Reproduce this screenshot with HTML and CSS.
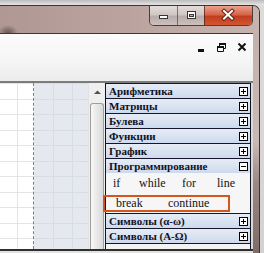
FILE: index.html
```html
<!DOCTYPE html>
<html lang="ru">
<head>
<meta charset="utf-8">
<title>Панель</title>
<link rel="stylesheet" href="styles.css">
</head>
<body>
<div class="screen">
  <div class="desk-top"></div>
  <div class="window">
    <div class="titlebar">
      <div class="caption-buttons">
        <div class="cbtn cbtn-min">
          <svg width="27" height="19" viewBox="0 0 27 19"><rect x="9.5" y="9.5" width="8" height="3" fill="#fff" stroke="#3a3333"/></svg>
        </div>
        <div class="cbtn cbtn-max">
          <svg width="26" height="19" viewBox="0 0 26 19"><rect x="9.5" y="5.5" width="8" height="7" fill="#fff" stroke="#3a3333"/><rect x="11.5" y="8.5" width="4" height="2" fill="#bfb4b2" stroke="#3a3333"/></svg>
        </div>
        <div class="cbtn cbtn-close">
          <svg width="47" height="19" viewBox="0 0 47 19"><path d="M19 5L27 12.5M27 5L19 12.5" stroke="#5a2418" stroke-width="4" stroke-linecap="square"/><path d="M19 5L27 12.5M27 5L19 12.5" stroke="#fff" stroke-width="2" stroke-linecap="square"/></svg>
        </div>
      </div>
    </div>
    <div class="client">
      <div class="mdi-bar">
        <svg class="mdi-controls" width="50" height="10" viewBox="0 0 50 10">
          <rect x="1" y="6" width="6" height="3" fill="#111"/>
          <rect x="22" y="0" width="7" height="2" fill="#111"/>
          <path d="M28.5 2V5.5H26.5M22.5 2V3" fill="none" stroke="#111"/>
          <rect x="20" y="3" width="7" height="2" fill="#111"/>
          <path d="M20.5 5V8.5H26.5V5" fill="none" stroke="#111"/>
          <path d="M41.5 0.5L48.5 7.5M48.5 0.5L41.5 7.5" stroke="#111" stroke-width="2"/>
        </svg>
      </div>
      <div class="workspace">
        <div class="sheet">
          <div class="sheet-white"></div>
          <div class="sheet-blue"></div>
        </div>
        <div class="vscroll">
          <div class="vs-up"><svg width="7" height="4" viewBox="0 0 7 4"><path d="M0 4L3.5 0.5L7 4z" fill="#505050"/></svg></div>
          <div class="vs-thumb"></div>
        </div>
        <div class="panel">
          <div class="hdr"><span>Арифметика</span><svg class="pm" width="9" height="9" viewBox="0 0 9 9"><rect x=".5" y=".5" width="8" height="8" fill="#fff" stroke="#000"/><path d="M2 4.5h5M4.5 2v5" stroke="#000"/></svg></div>
          <div class="hdr"><span>Матрицы</span><svg class="pm" width="9" height="9" viewBox="0 0 9 9"><rect x=".5" y=".5" width="8" height="8" fill="#fff" stroke="#000"/><path d="M2 4.5h5M4.5 2v5" stroke="#000"/></svg></div>
          <div class="hdr"><span>Булева</span><svg class="pm" width="9" height="9" viewBox="0 0 9 9"><rect x=".5" y=".5" width="8" height="8" fill="#fff" stroke="#000"/><path d="M2 4.5h5M4.5 2v5" stroke="#000"/></svg></div>
          <div class="hdr"><span>Функции</span><svg class="pm" width="9" height="9" viewBox="0 0 9 9"><rect x=".5" y=".5" width="8" height="8" fill="#fff" stroke="#000"/><path d="M2 4.5h5M4.5 2v5" stroke="#000"/></svg></div>
          <div class="hdr"><span>График</span><svg class="pm" width="9" height="9" viewBox="0 0 9 9"><rect x=".5" y=".5" width="8" height="8" fill="#fff" stroke="#000"/><path d="M2 4.5h5M4.5 2v5" stroke="#000"/></svg></div>
          <div class="hdr"><span>Программирование</span><svg class="pm" width="9" height="9" viewBox="0 0 9 9"><rect x=".5" y=".5" width="8" height="8" fill="#fff" stroke="#000"/><path d="M2 4.5h5" stroke="#000"/></svg></div>
          <div class="pbody">
            <div class="prow r1"><span>if</span><span>while</span><span>for</span><span>line</span></div>
            <div class="prow r2"><span>break</span><span>continue</span></div>
            <div class="mark"></div>
          </div>
          <div class="hdr"><span>Символы (α-ω)</span><svg class="pm" width="9" height="9" viewBox="0 0 9 9"><rect x=".5" y=".5" width="8" height="8" fill="#fff" stroke="#000"/><path d="M2 4.5h5M4.5 2v5" stroke="#000"/></svg></div>
          <div class="hdr"><span>Символы (Α-Ω)</span><svg class="pm" width="9" height="9" viewBox="0 0 9 9"><rect x=".5" y=".5" width="8" height="8" fill="#fff" stroke="#000"/><path d="M2 4.5h5M4.5 2v5" stroke="#000"/></svg></div>
          <div class="panel-end"></div>
        </div>
        <div class="edge"></div>
      </div>
      <div class="status"></div>
    </div>
  </div>
</div>
</body>
</html>
```

FILE: styles.css
```css
* { box-sizing: border-box; }
html, body { margin: 0; padding: 0; }
body {
  width: 264px;
  height: 253px;
  overflow: hidden;
  background: #d6d6d6;
  font-family: "Liberation Serif", "Times New Roman", serif;
}
.screen {
  width: 264px;
  height: 253px;
  display: flex;
  flex-direction: column;
  background: linear-gradient(to bottom, #dcdcdc, #d2d2d2);
}
.desk-top {
  height: 5px;
  flex: none;
  background: linear-gradient(#bcbcbc, #e4e4e4);
}
.window {
  flex: 1;
  min-height: 0;
  margin-right: 4px;
  border-top: 1px solid #3b3434;
  border-right: 1px solid #3b3434;
  border-top-right-radius: 7px;
  background: linear-gradient(to bottom, #c3afab 0%, #c9b9b5 55%, #9b8783 72%, #7f6b67 100%);
  display: flex;
  flex-direction: column;
}
.titlebar {
  height: 27px;
  flex: none;
  display: flex;
  justify-content: flex-end;
  align-items: flex-start;
  padding-right: 6px;
  border-top-right-radius: 6px;
  background:
    radial-gradient(ellipse 10px 8px at 8px 27px, rgba(70, 55, 55, 0.7), rgba(70, 55, 55, 0)),
    linear-gradient(to right, #b09793 0%, #bba4a0 50%, #c7b4af 100%);
}
.caption-buttons {
  display: flex;
  height: 20px;
  border: 1px solid rgba(45, 35, 35, 0.8);
  border-top: none;
  border-radius: 0 0 5px 5px;
  overflow: hidden;
}
.cbtn { display: flex; }
.cbtn-min {
  width: 27px;
  background: linear-gradient(#e4dcdb, #d0c6c4 45%, #b8acaa 55%, #cbc1bf);
}
.cbtn-max {
  width: 27px;
  border-left: 1px solid rgba(60, 50, 50, 0.6);
  background: linear-gradient(#e4dcdb, #d0c6c4 45%, #b8acaa 55%, #cbc1bf);
}
.cbtn-close {
  width: 48px;
  border-left: 1px solid rgba(60, 30, 30, 0.7);
  background: linear-gradient(#eba08c, #d8654a 45%, #c13d20 55%, #d45630);
}
.client {
  flex: 1;
  min-height: 0;
  margin-right: 6px;
  border-top: 1px solid #3e3535;
  display: flex;
  flex-direction: column;
  background: #fff;
}
.mdi-bar {
  height: 49px;
  flex: none;
  border-bottom: 2px solid #7b7b7b;
  background: linear-gradient(#fbfbfb, #f6f6f6 55%, #ececec);
  display: flex;
  justify-content: flex-end;
  align-items: flex-start;
  padding: 9px 6px 0 0;
}
.workspace {
  flex: 1;
  min-height: 0;
  display: flex;
}
.sheet {
  width: 88px;
  flex: none;
  display: flex;
}
.sheet-white {
  width: 34px;
  border-right: 1px dashed #7d7d7d;
  background-color: #fff;
  background-image:
    linear-gradient(to right, transparent 17px, #e4e4e4 17px, #e4e4e4 18px, transparent 18px),
    linear-gradient(to bottom, #e4e4e4 0, #e4e4e4 1px, transparent 1px, transparent 16px, #e4e4e4 16px, #e4e4e4 17px, transparent 17px);
  background-size: 100% 100%, 100% 31px;
}
.sheet-blue {
  flex: 1;
  background-color: #e5e8ef;
  background-image:
    linear-gradient(to right, transparent 19px, #d8dce4 19px, #d8dce4 20px, transparent 20px, transparent 38px, #d8dce4 38px, #d8dce4 39px, transparent 39px),
    linear-gradient(to bottom, #d8dce4 0, #d8dce4 1px, transparent 1px, transparent 16px, #d8dce4 16px, #d8dce4 17px, transparent 17px);
  background-size: 100% 100%, 100% 31px;
}
.vscroll {
  width: 17px;
  flex: none;
  display: flex;
  flex-direction: column;
  padding: 0 1px;
  background: #efefef;
  border-left: 1px solid #e2e2e2;
}
.vs-up {
  height: 20px;
  flex: none;
  display: flex;
  justify-content: center;
  padding-top: 7px;
}
.vs-thumb {
  flex: 1;
  border: 1px solid #9e9e9e;
  border-bottom: none;
  border-radius: 3px 3px 0 0;
  background: linear-gradient(to right, #f8f8f8, #e8e8e8 50%, #d9d9d9);
}
.panel {
  width: 146px;
  flex: none;
  display: flex;
  flex-direction: column;
  border-left: 1px solid #141420;
  border-right: 1px solid #141420;
  background: #f3f3f3;
}
.hdr {
  height: 15px;
  flex: none;
  border-top: 1px solid #16162a;
  background: linear-gradient(#e6ecf6, #cddaed);
  display: flex;
  justify-content: space-between;
  align-items: center;
  padding: 0 2px 0 3px;
  font-size: 11px;
  font-weight: bold;
  line-height: 14px;
  color: #10101c;
  white-space: nowrap;
}
.pm { flex: none; display: block; }
.pbody {
  height: 40px;
  flex: none;
  position: relative;
  background: #f6f6f6;
  font-size: 12px;
  line-height: 16px;
  color: #141414;
}
.prow { display: grid; }
.r1 {
  grid-template-columns: 26px 43px 35px auto;
  padding-left: 7px;
  margin-top: 2px;
}
.r2 {
  grid-template-columns: 52px auto;
  padding-left: 10px;
  margin-top: 4px;
}
.mark {
  position: absolute;
  left: -3px;
  top: 22px;
  width: 127px;
  height: 17px;
  border: 2px solid #d4561f;
}
.panel-end {
  flex: 1;
  border-top: 1px solid #16162a;
  background: #f3f3f3;
}
.edge {
  width: 2px;
  flex: none;
  background: #dadada;
}
.status {
  height: 4px;
  flex: none;
  border-top: 2px solid #2f2f2f;
  background: #e2e2e2;
}
```
